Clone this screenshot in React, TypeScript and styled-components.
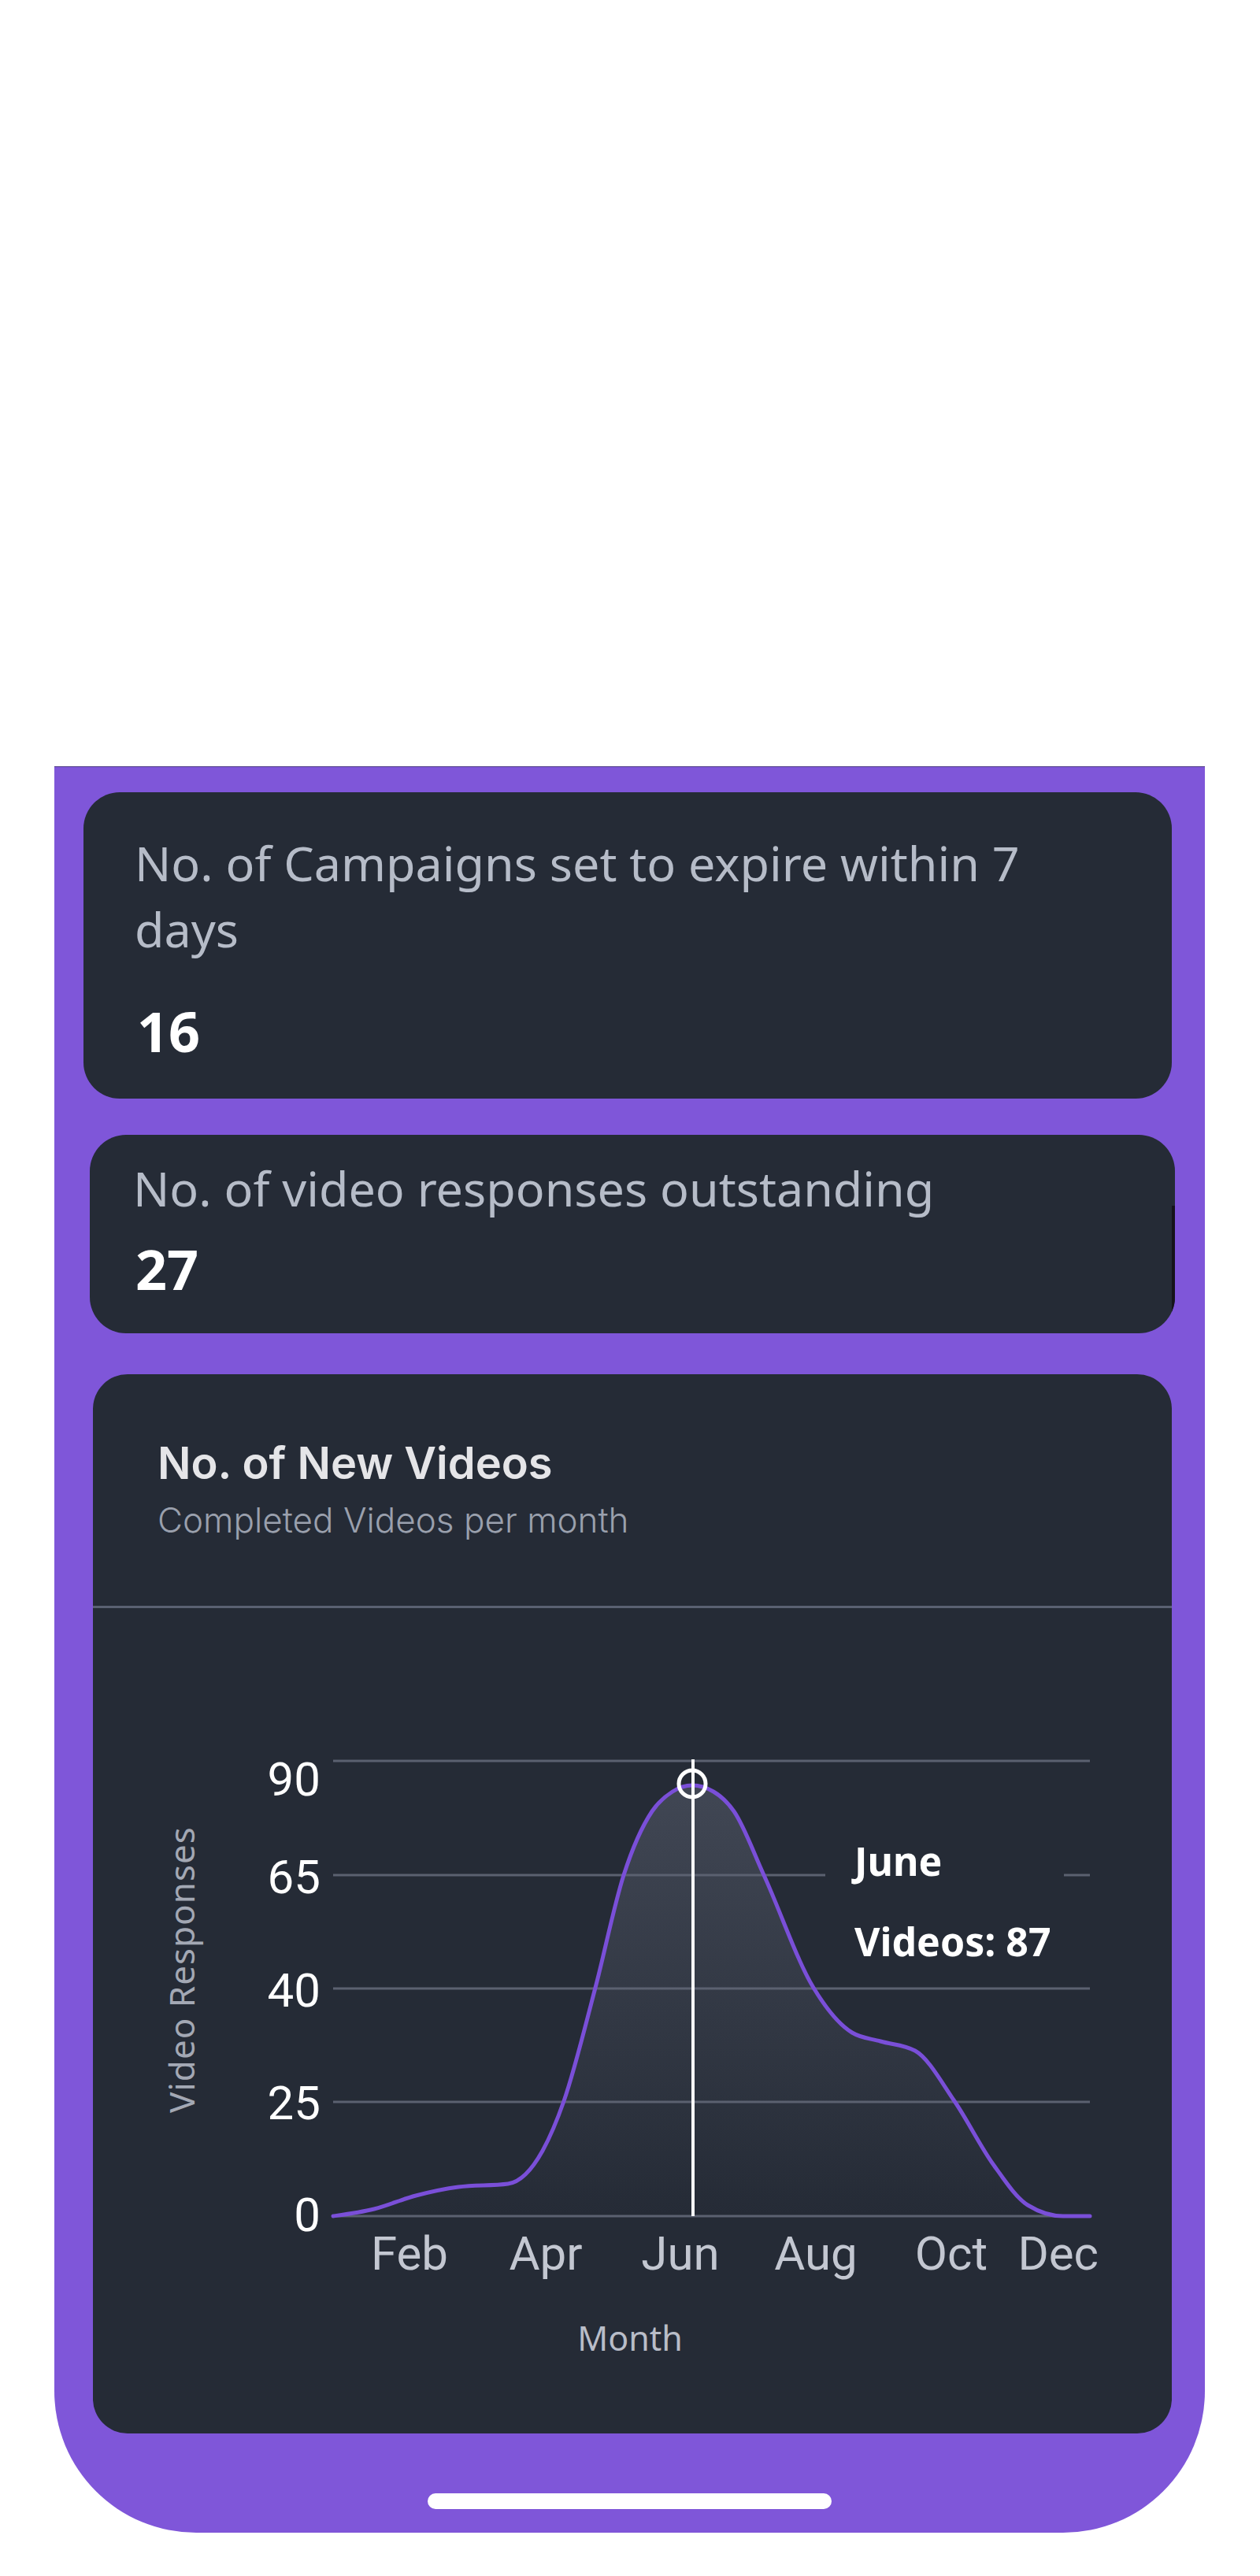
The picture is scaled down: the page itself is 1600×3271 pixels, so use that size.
import React from 'react'
import styled, { createGlobalStyle } from 'styled-components'

const GlobalStyle = createGlobalStyle`
  * { box-sizing: border-box; }
  body {
    margin: 0;
    background: #ffffff;
    font-family: "Noto Sans", sans-serif;
  }
`

// sampled points of the curve, in chart coordinates
const curvePoints: Array<[number, number]> = [
  [305, 772], [357, 763], [410, 746], [464, 735], [527, 731], [571, 689], [598, 626],
  [638, 482], [674, 339], [710, 258], [736, 233], [761, 225], [788, 233], [814, 258],
  [852, 339], [915, 482], [964, 539], [1000, 550], [1044, 562], [1094, 626],
  [1143, 706], [1187, 758], [1232, 772], [1266, 772],
]

const gridLines = [
  { value: '90', y: 194, labelY: 238 },
  { value: '65', y: 339, labelY: 362 },
  { value: '40', y: 483, labelY: 506 },
  { value: '25', y: 627, labelY: 649 },
  { value: '0', y: 772, labelY: 791 },
]

const months = [
  { name: 'Feb', x: 402, anchor: 'middle' },
  { name: 'Apr', x: 575, anchor: 'middle' },
  { name: 'Jun', x: 746, anchor: 'middle' },
  { name: 'Aug', x: 918, anchor: 'middle' },
  { name: 'Oct', x: 1090, anchor: 'middle' },
  { name: 'Dec', x: 1277, anchor: 'end' },
]

// monotone cubic curve, same idea as d3 curveMonotoneX
function monotonePath(pts: Array<[number, number]>) {
  const n = pts.length
  const tangents: number[] = new Array(n).fill(0)
  for (let i = 1; i < n - 1; i++) {
    const h0 = pts[i][0] - pts[i - 1][0]
    const h1 = pts[i + 1][0] - pts[i][0]
    const s0 = (pts[i][1] - pts[i - 1][1]) / h0
    const s1 = (pts[i + 1][1] - pts[i][1]) / h1
    const p = (s0 * h1 + s1 * h0) / (h0 + h1)
    tangents[i] = (Math.sign(s0) + Math.sign(s1)) * Math.min(Math.abs(s0), Math.abs(s1), 0.5 * Math.abs(p)) || 0
  }
  const h = pts[1][0] - pts[0][0]
  tangents[0] = (3 * (pts[1][1] - pts[0][1]) / h - tangents[1]) / 2
  const hl = pts[n - 1][0] - pts[n - 2][0]
  tangents[n - 1] = (3 * (pts[n - 1][1] - pts[n - 2][1]) / hl - tangents[n - 2]) / 2
  let d = `M${pts[0][0]},${pts[0][1]}`
  for (let i = 0; i < n - 1; i++) {
    const [x0, y0] = pts[i]
    const [x1, y1] = pts[i + 1]
    const dx = (x1 - x0) / 3
    d += ` C${(x0 + dx).toFixed(1)},${(y0 + dx * tangents[i]).toFixed(1)} ${(x1 - dx).toFixed(1)},${(y1 - dx * tangents[i + 1]).toFixed(1)} ${x1},${y1}`
  }
  return d
}

const Page = styled.div`
  width: 1600px;
  min-height: 3271px;
  padding-top: 973px;
  padding-left: 69px;
`

const Frame = styled.div`
  width: 1461px;
  height: 2243px;
  background: #7f56d9;
  border-top: 1px solid #4d3a86;
  border-radius: 0 0 180px 180px;
  display: flex;
  flex-direction: column;
  align-items: flex-start;
  padding-top: 32px;
`

const StatCard = styled.div<{ $left: number; $top: number; $width: number; $height: number; $padLeft: number; $padTop: number; $shade?: boolean }>`
  position: relative;
  overflow: hidden;
  margin-left: ${(p) => p.$left}px;
  margin-top: ${(p) => p.$top}px;
  width: ${(p) => p.$width}px;
  height: ${(p) => p.$height}px;
  padding: ${(p) => p.$padTop}px 0 0 ${(p) => p.$padLeft}px;
  background: #252b36;
  border-radius: 46px;
  display: flex;
  flex-direction: column;
  &::after {
    content: '';
    display: ${(p) => (p.$shade ? 'block' : 'none')};
    position: absolute;
    right: 0;
    top: 90px;
    bottom: 0;
    width: 4px;
    background: #16141b;
  }
`

const StatLabel = styled.div`
  max-width: 1200px;
  font-family: "Noto Sans", sans-serif;
  font-size: 61px;
  line-height: 84px;
  color: #b6bcc8;
`

const StatValue = styled.div<{ $gap: number }>`
  margin-top: ${(p) => p.$gap}px;
  padding-left: 3px;
  font-family: "Noto Sans", sans-serif;
  font-weight: 700;
  font-size: 70px;
  line-height: 70px;
  color: #ffffff;
`

const ChartCard = styled.div`
  margin-left: 49px;
  margin-top: 52px;
  width: 1370px;
  height: 1345px;
  background: #252b36;
  border-radius: 44px;
  overflow: hidden;
  display: flex;
  flex-direction: column;
`

const ChartHeader = styled.div`
  height: 297px;
  padding: 80px 0 0 82px;
  border-bottom: 3px solid #5a6172;
  flex-shrink: 0;
`

const ChartTitle = styled.div`
  font-family: Inter, sans-serif;
  font-weight: 600;
  font-size: 56px;
  line-height: 67px;
  color: #e5e5e8;
`

const ChartSubtitle = styled.div`
  margin-top: 12px;
  font-family: Inter, sans-serif;
  font-weight: 300;
  font-size: 44px;
  line-height: 53px;
  color: #9aa0ad;
`

const ChartArea = styled.div`
  position: relative;
  flex: 1;
`

const ChartSvg = styled.svg`
  display: block;
`

const Tooltip = styled.div`
  position: absolute;
  left: 930px;
  top: 258px;
  width: 303px;
  height: 215px;
  padding: 12px 0 0 37px;
  background: #252b36;
  font-family: "Noto Sans", sans-serif;
  font-weight: 700;
  font-size: 50px;
  line-height: 102px;
  color: #ffffff;
`

const HomeBar = styled.div`
  align-self: center;
  margin-top: auto;
  margin-bottom: 30px;
  width: 513px;
  height: 20px;
  border-radius: 10px;
  background: #ffffff;
`

const NewVideosChart = () => {
  const line = monotonePath(curvePoints)
  const area = `${line} L1266,772 L305,772 Z`
  return (
    <ChartArea>
      <ChartSvg width={1370} height={1048} viewBox="0 0 1370 1048">
        <defs>
          <linearGradient id="areaFill" x1="0" y1="225" x2="0" y2="772" gradientUnits="userSpaceOnUse">
            <stop offset="0" stopColor="#4a505e" stopOpacity="0.75" />
            <stop offset="1" stopColor="#4a505e" stopOpacity="0" />
          </linearGradient>
        </defs>
        <path d={area} fill="url(#areaFill)" />
        {gridLines.map((g) => (
          <g key={g.value}>
            <line x1={305} x2={1266} y1={g.y} y2={g.y} stroke="#5b6170" strokeWidth={3} />
            <text x={289} y={g.labelY} textAnchor="end" fontFamily="Roboto, sans-serif" fontSize={60} fill="#ffffff">
              {g.value}
            </text>
          </g>
        ))}
        <path d={line} fill="none" stroke="#7a4fd8" strokeWidth={5} strokeLinecap="round" />
        <line x1={762} x2={762} y1={192} y2={772} stroke="#ffffff" strokeWidth={4} />
        <circle cx={761} cy={223} r={17} fill="none" stroke="#ffffff" strokeWidth={5} />
        {months.map((m) => (
          <text key={m.name} x={m.x} y={840} textAnchor={m.anchor as any} fontFamily="Roboto, sans-serif" fontSize={60} fill="#c3c7d1">
            {m.name}
          </text>
        ))}
        <text
          x={129}
          y={459}
          transform="rotate(-90 129 459)"
          textAnchor="middle"
          fontFamily="'Noto Sans', sans-serif"
          fontSize={44}
          letterSpacing={1}
          fill="#a3a8b4"
        >
          Video Responses
        </text>
        <text x={682} y={943} textAnchor="middle" fontFamily="'Noto Sans', sans-serif" fontSize={43} fill="#b9bdc8">
          Month
        </text>
      </ChartSvg>
      <Tooltip>
        <div>June</div>
        <div>Videos: 87</div>
      </Tooltip>
    </ChartArea>
  )
}

export default function App() {
  return (
    <Page>
      <GlobalStyle />
      <Frame>
        <StatCard $left={37} $top={0} $width={1382} $height={389} $padLeft={65} $padTop={48}>
          <StatLabel>No. of Campaigns set to expire within 7 days</StatLabel>
          <StatValue $gap={52}>16</StatValue>
        </StatCard>
        <StatCard $left={45} $top={46} $width={1378} $height={252} $padLeft={55} $padTop={26} $shade>
          <StatLabel>No. of video responses outstanding</StatLabel>
          <StatValue $gap={25}>27</StatValue>
        </StatCard>
        <ChartCard>
          <ChartHeader>
            <ChartTitle>No. of New Videos</ChartTitle>
            <ChartSubtitle>Completed Videos per month</ChartSubtitle>
          </ChartHeader>
          <NewVideosChart />
        </ChartCard>
        <HomeBar />
      </Frame>
    </Page>
  )
}
